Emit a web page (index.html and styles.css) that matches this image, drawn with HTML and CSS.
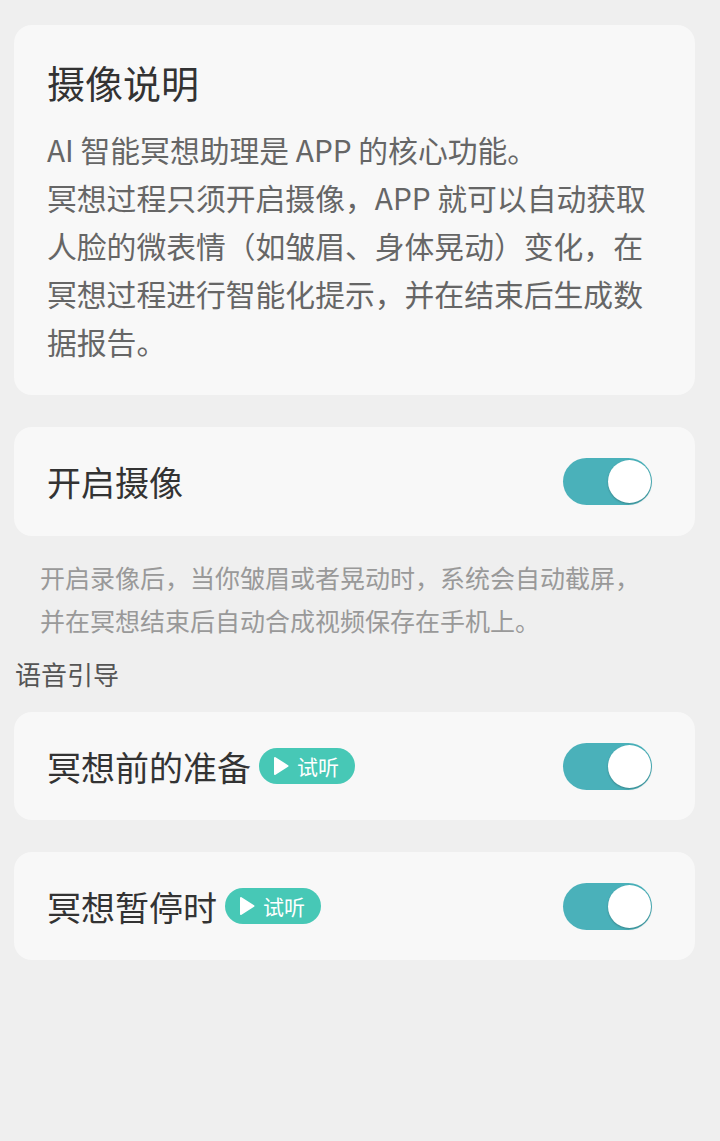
FILE: index.html
```html
<!DOCTYPE html>
<html lang="zh-CN">

<head>
    <meta charset="UTF-8">
    <meta name="viewport" content="width=device-width, initial-scale=1.0">
    <title>摄像设置</title>
    <link rel="stylesheet" href="styles.css">
</head>

<body>
    <!-- Camera description -->
    <div class="card intro">
        <h2 class="intro-title">摄像说明</h2>
        <p class="intro-text">AI 智能冥想助理是 APP 的核心功能。<br>冥想过程只须开启摄像，APP 就可以自动获取人脸的微表情（如皱眉、身体晃动）变化，在冥想过程进行智能化提示，并在结束后生成数据报告。</p>
    </div>

    <!-- Camera switch -->
    <div class="card row">
        <span class="row-label">开启摄像</span>
        <span class="switch on"><span class="knob"></span></span>
    </div>
    <p class="hint">开启录像后，当你皱眉或者晃动时，系统会自动截屏，<br>并在冥想结束后自动合成视频保存在手机上。</p>

    <div class="section-title">语音引导</div>

    <div class="card row">
        <span class="row-label">冥想前的准备
            <span class="listen">
                <svg width="16" height="20" viewBox="0 0 16 20"><path d="M2 2 L14.5 10 L2 18 Z" fill="#fff" stroke="#fff" stroke-width="2" stroke-linejoin="round"/></svg>
                试听
            </span>
        </span>
        <span class="switch on"><span class="knob"></span></span>
    </div>

    <div class="card row">
        <span class="row-label">冥想暂停时
            <span class="listen">
                <svg width="16" height="20" viewBox="0 0 16 20"><path d="M2 2 L14.5 10 L2 18 Z" fill="#fff" stroke="#fff" stroke-width="2" stroke-linejoin="round"/></svg>
                试听
            </span>
        </span>
        <span class="switch on"><span class="knob"></span></span>
    </div>
</body>
</html>
```

FILE: styles.css
```css
body {
    margin: 0;
    padding: 25px 25px 40px 14px;
    background-color: #efefef;
    font-family: "Noto Sans CJK SC", "Noto Sans", sans-serif;
    color: #333;
}

.card {
    background-color: #f8f8f8;
    border-radius: 18px;
}

.intro {
    padding: 27px 33px 30px 33px;
}

.intro-title {
    margin: 0 0 13px 0;
    font-size: 38px;
    font-weight: normal;
    line-height: 60px;
    color: #333;
}

.intro-text {
    margin: 0;
    font-size: 29.8px;
    line-height: 48px;
    color: #666;
}

.row {
    display: flex;
    align-items: center;
    justify-content: space-between;
    height: 108px;
    padding: 0 43px 0 33px;
    margin-top: 32px;
}

.intro + .row {
    height: 109px;
}

.row-label {
    display: flex;
    align-items: center;
    font-size: 34px;
    color: #333;
}

.switch {
    position: relative;
    width: 89px;
    height: 47px;
    border-radius: 24px;
    background-color: #cfcfcf;
}

.switch.on {
    background-color: #4ab1ba;
}

.knob {
    position: absolute;
    top: 2px;
    right: 1px;
    width: 43px;
    height: 43px;
    border-radius: 50%;
    background-color: #fff;
    box-shadow: 0 1px 2px rgba(0, 0, 0, 0.25);
}

.listen {
    display: inline-flex;
    align-items: center;
    gap: 8px;
    height: 36px;
    margin-left: 8px;
    padding: 0 16px 0 14px;
    border-radius: 18px;
    background-color: #47c8b6;
    color: #fff;
    font-size: 21px;
}

.hint {
    margin: 20px 0 0 26px;
    font-size: 25px;
    line-height: 43px;
    color: #999;
}

.section-title {
    margin-top: 14px;
    padding-left: 1px;
    font-size: 26px;
    line-height: 36px;
    color: #555;
}

.section-title + .row {
    margin-top: 20px;
}
```
